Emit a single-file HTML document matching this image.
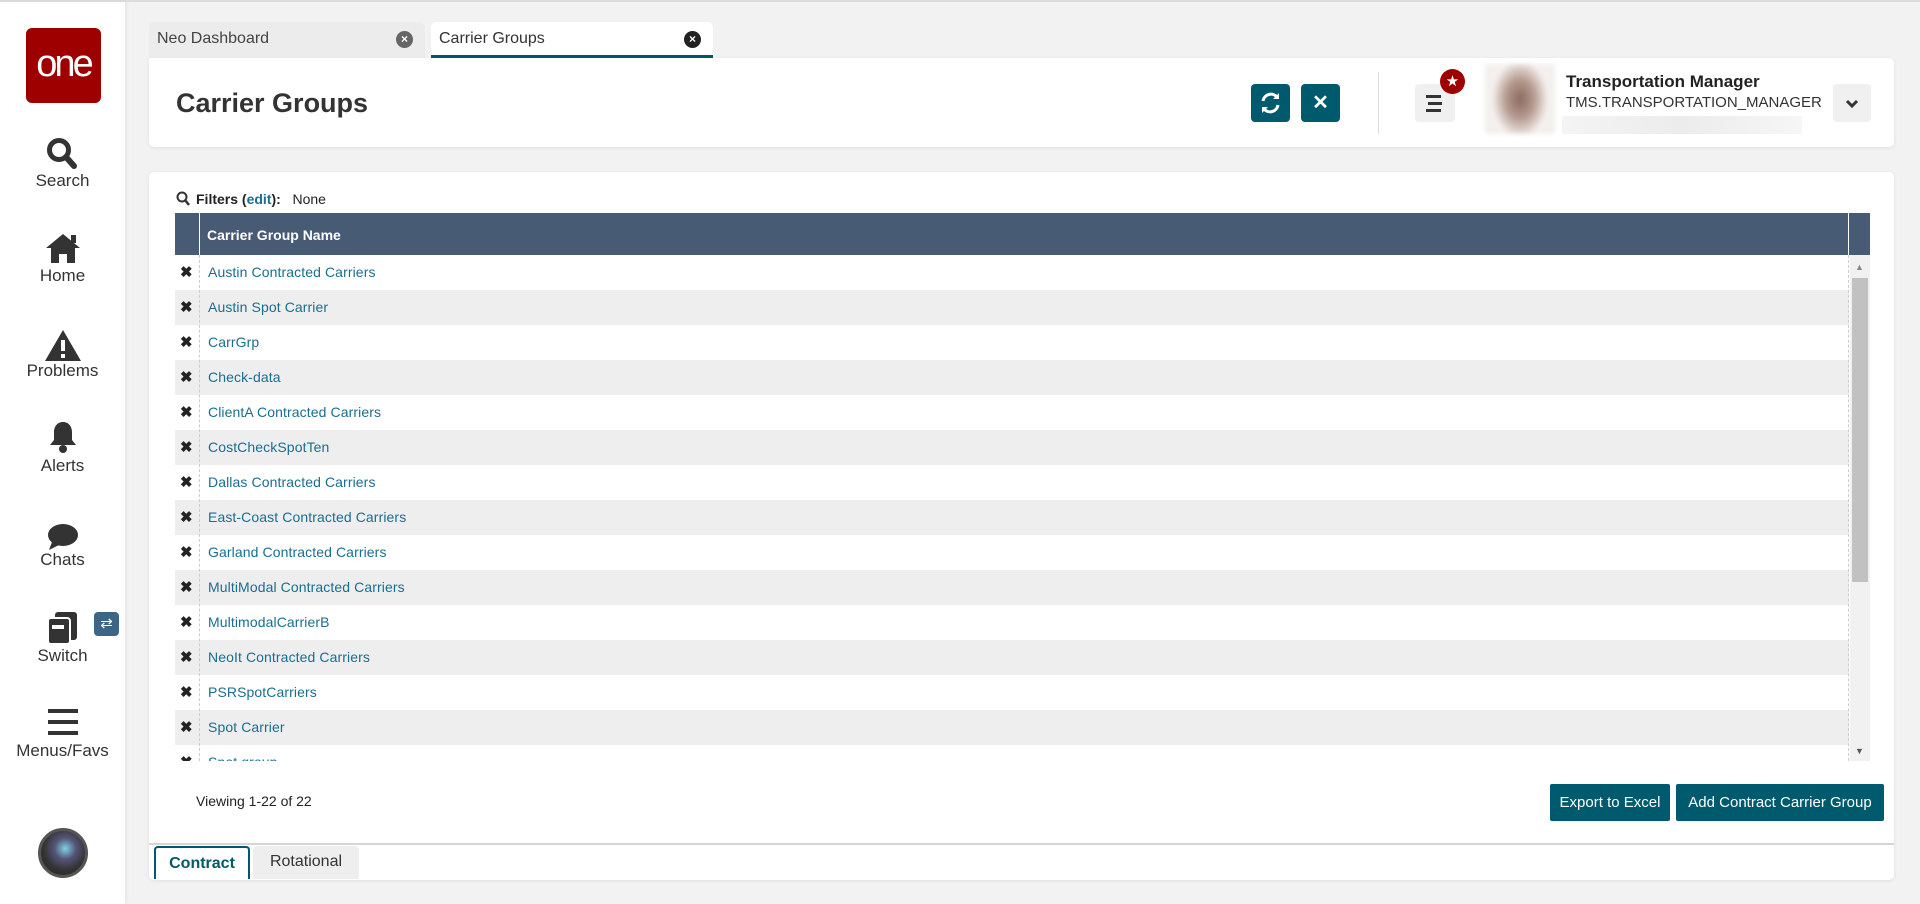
<!DOCTYPE html>
<html><head><meta charset="utf-8"><style>
*{box-sizing:border-box;margin:0;padding:0}
body{width:1920px;height:902px;background:#f2f2f2;font-family:"Liberation Sans",sans-serif;position:relative;overflow:hidden;border-top:2px solid #ddd}
.abs{position:absolute}
.side{left:0;top:0;width:125px;height:902px;background:#fff;box-shadow:1px 0 4px rgba(0,0,0,.06)}
.logo{left:26px;top:26px;width:75px;height:75px;background:#9e0000;border-radius:6px;color:#fff;font-size:38px;text-align:center;line-height:72px;letter-spacing:-3px}
.nav{left:0;width:125px;text-align:center;font-size:17px;color:#333}
.card{background:#fff;border-radius:5px;box-shadow:0 1px 4px rgba(0,0,0,.08)}
.tab{top:20px;height:36px;border-radius:5px 5px 0 0;font-size:16px;color:#444;padding:8px 8px}
.xc{position:absolute;right:12px;top:9px;width:17px;height:17px;border-radius:50%;color:#fff;font-size:12px;line-height:17px;text-align:center;font-weight:bold}
.btn{background:#005a6e;border-radius:4px;color:#fff}
.row{height:35px;font-size:14px;color:#1a6e8e;line-height:35px;padding-left:33px;position:relative;letter-spacing:0.1px}
.row:nth-child(even){background:#eee}
.row b{position:absolute;left:5px;top:0;color:#222;font-size:15px}
</style></head><body>
<div class="abs side"></div>
<div class="abs logo">one</div>
<svg class="abs" style="left:46px;top:135px" width="32" height="34" viewBox="0 0 32 34"><circle cx="13" cy="13" r="9.5" fill="none" stroke="#333" stroke-width="5"/><path d="M20 20l8 9" stroke="#333" stroke-width="6" stroke-linecap="round"/></svg>
<div class="abs nav" style="top:169px">Search</div>
<svg class="abs" style="left:44px;top:230px" width="38" height="32" viewBox="0 0 38 32"><path d="M2 16L19 2l17 14h-5v15h-8v-9h-8v9H7V16z" fill="#333"/><rect x="27" y="3" width="5" height="8" fill="#333"/></svg>
<div class="abs nav" style="top:264px">Home</div>
<svg class="abs" style="left:44px;top:326px" width="38" height="34" viewBox="0 0 38 34"><path d="M19 2L37 33H1z" fill="#333"/><rect x="17" y="12" width="4" height="11" fill="#fff"/><rect x="17" y="26" width="4" height="4" fill="#fff"/></svg>
<div class="abs nav" style="top:359px">Problems</div>
<svg class="abs" style="left:48px;top:418px" width="30" height="34" viewBox="0 0 30 34"><path d="M15 2c-6 0-9 5-9 10v8l-4 5h26l-4-5v-8c0-5-3-10-9-10z" fill="#333"/><circle cx="15" cy="29" r="4" fill="#333"/></svg>
<div class="abs nav" style="top:454px">Alerts</div>
<svg class="abs" style="left:46px;top:520px" width="34" height="30" viewBox="0 0 34 30"><ellipse cx="17" cy="13" rx="15" ry="11" fill="#333"/><path d="M6 20l-3 8 10-5z" fill="#333"/></svg>
<div class="abs nav" style="top:548px">Chats</div>
<svg class="abs" style="left:46px;top:609px" width="34" height="34" viewBox="0 0 34 34"><rect x="9" y="1" width="22" height="28" rx="3" fill="#333"/><rect x="2" y="7" width="22" height="26" rx="3" fill="#333" stroke="#fff" stroke-width="2"/><rect x="6" y="14" width="12" height="4" fill="#fff"/></svg>
<div class="abs" style="left:94px;top:610px;width:25px;height:24px;background:#3d6585;border-radius:4px;color:#fff;font-size:15px;text-align:center;line-height:24px">⇄</div>
<div class="abs nav" style="top:644px">Switch</div>
<svg class="abs" style="left:48px;top:707px" width="30" height="26" viewBox="0 0 30 26"><rect y="0" width="30" height="4" fill="#333"/><rect y="11" width="30" height="4" fill="#333"/><rect y="22" width="30" height="4" fill="#333"/></svg>
<div class="abs nav" style="top:739px">Menus/Favs</div>
<div class="abs" style="left:38px;top:826px;width:50px;height:50px;border-radius:50%;background:radial-gradient(circle at 55% 40%,#7fd3e6 0,#557 30%,#333 60%,#222 100%);border:3px solid #555"></div>

<div class="abs tab" style="left:149px;width:276px;background:#ececec">Neo Dashboard<span class="xc" style="background:#666">×</span></div>
<div class="abs tab" style="left:431px;width:282px;background:#fff;border-bottom:3px solid #00596b;color:#333">Carrier Groups<span class="xc" style="background:#222">×</span></div>

<div class="abs card" style="left:149px;top:56px;width:1745px;height:89px;border-radius:0 5px 5px 5px"></div>
<div class="abs" style="left:176px;top:86px;font-size:27px;font-weight:bold;color:#333">Carrier Groups</div>
<div class="abs btn" style="left:1251px;top:82px;width:39px;height:38px"><svg width="39" height="38" viewBox="0 0 39 38"><path d="M12 17a8 8 0 0 1 14-4M27 21a8 8 0 0 1-14 4" fill="none" stroke="#fff" stroke-width="3"/><path d="M28 9v6h-6zM11 29v-6h6z" fill="#fff"/></svg></div>
<div class="abs btn" style="left:1301px;top:82px;width:39px;height:38px;text-align:center;line-height:38px;font-size:20px;font-weight:bold">✕</div>
<div class="abs" style="left:1378px;top:70px;width:1px;height:62px;background:#ddd"></div>
<div class="abs" style="left:1415px;top:82px;width:40px;height:38px;background:#f0f0f0;border-radius:4px"><svg width="40" height="38"><rect x="11" y="11" width="15" height="3" fill="#333"/><rect x="13" y="18" width="14" height="3" fill="#333"/><rect x="11" y="25" width="15" height="3" fill="#333"/></svg></div>
<div class="abs" style="left:1440px;top:67px;width:25px;height:25px;border-radius:50%;background:#9e0000;color:#fff;text-align:center;font-size:15px;line-height:25px">★</div>
<div class="abs" style="left:1485px;top:62px;width:70px;height:70px;background:radial-gradient(ellipse 40% 55% at 50% 50%,#8a6a60 0,#b59a90 50%,#f4f0ee 100%);filter:blur(2px)"></div>
<div class="abs" style="left:1566px;top:70px;font-size:17px;font-weight:bold;color:#222">Transportation Manager</div>
<div class="abs" style="left:1566px;top:92px;font-size:15px;color:#333">TMS.TRANSPORTATION_MANAGER</div>
<div class="abs" style="left:1562px;top:114px;width:240px;height:18px;background:linear-gradient(90deg,#f4f4f4,#ececec,#f6f6f6)"></div>
<div class="abs" style="left:1833px;top:82px;width:38px;height:38px;background:#f0f0f0;border-radius:4px"><svg width="38" height="38"><path d="M14 17l5 5 5-5" fill="none" stroke="#333" stroke-width="3"/></svg></div>

<div class="abs card" style="left:149px;top:170px;width:1745px;height:708px"></div>
<svg class="abs" style="left:176px;top:189px" width="14" height="16" viewBox="0 0 14 16"><circle cx="6" cy="6" r="4.5" fill="none" stroke="#333" stroke-width="2"/><path d="M9 9l4 5" stroke="#333" stroke-width="2.5"/></svg>
<div class="abs" style="left:196px;top:189px;font-size:14px;color:#222"><b>Filters (<span style="color:#1a6e8e">edit</span>):</b>&nbsp;&nbsp; None</div>
<div class="abs" style="left:175px;top:211px;width:1695px;height:42px;background:#485b74"></div>
<div class="abs" style="left:199px;top:211px;width:1px;height:42px;background:#fff"></div>
<div class="abs" style="left:1848px;top:211px;width:1px;height:42px;background:#fff"></div>
<div class="abs" style="left:207px;top:225px;font-size:14px;font-weight:bold;color:#fff">Carrier Group Name</div>
<div class="abs" style="left:175px;top:253px;width:1674px;height:506px;overflow:hidden">
<div class="row"><b>✖</b>Austin Contracted Carriers</div>
<div class="row"><b>✖</b>Austin Spot Carrier</div>
<div class="row"><b>✖</b>CarrGrp</div>
<div class="row"><b>✖</b>Check-data</div>
<div class="row"><b>✖</b>ClientA Contracted Carriers</div>
<div class="row"><b>✖</b>CostCheckSpotTen</div>
<div class="row"><b>✖</b>Dallas Contracted Carriers</div>
<div class="row"><b>✖</b>East-Coast Contracted Carriers</div>
<div class="row"><b>✖</b>Garland Contracted Carriers</div>
<div class="row"><b>✖</b>MultiModal Contracted Carriers</div>
<div class="row"><b>✖</b>MultimodalCarrierB</div>
<div class="row"><b>✖</b>NeoIt Contracted Carriers</div>
<div class="row"><b>✖</b>PSRSpotCarriers</div>
<div class="row"><b>✖</b>Spot Carrier</div>
<div class="row"><b>✖</b>Spot group</div>
</div>
<div class="abs" style="left:199px;top:253px;height:506px;border-left:1px dashed #ccc"></div>
<div class="abs" style="left:1848px;top:253px;height:506px;border-left:1px dashed #ccc"></div>
<div class="abs" style="left:1850px;top:253px;width:20px;height:506px;background:#f1f1f1"></div>
<div class="abs" style="left:1852px;top:276px;width:16px;height:304px;background:#c1c1c1"></div>
<div class="abs" style="left:1855px;top:260px;font-size:9px;color:#888">▲</div>
<div class="abs" style="left:1855px;top:744px;font-size:9px;color:#555">▼</div>
<div class="abs" style="left:196px;top:791px;font-size:14px;color:#222">Viewing 1-22 of 22</div>
<div class="abs btn" style="left:1550px;top:782px;width:120px;height:37px;font-size:15px;line-height:37px;text-align:center;border-radius:2px">Export to Excel</div>
<div class="abs btn" style="left:1676px;top:782px;width:208px;height:37px;font-size:15px;line-height:37px;text-align:center;border-radius:2px">Add Contract Carrier Group</div>
<div class="abs" style="left:149px;top:841px;width:1745px;height:2px;background:#d6d6d6"></div>
<div class="abs" style="left:154px;top:844px;width:96px;height:33px;border:2px solid #00596b;border-bottom:none;border-radius:4px 4px 0 0;font-size:16px;font-weight:bold;color:#00596b;text-align:center;line-height:32px">Contract</div>
<div class="abs" style="left:253px;top:844px;width:106px;height:33px;background:#eee;border-radius:4px 4px 0 0;font-size:16px;color:#333;text-align:center;line-height:32px">Rotational</div>
</body></html>
